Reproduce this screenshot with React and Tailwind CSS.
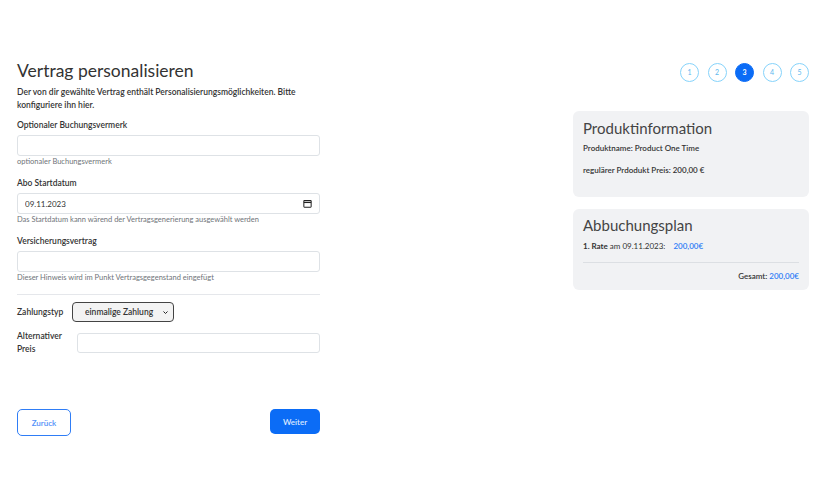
const font = { fontFamily: 'Lato, "Noto Sans", sans-serif' }

function Steps({ active = 3 }) {
  return (
    <div className="flex justify-end gap-[8.5px]">
      {[1, 2, 3, 4, 5].map(n => (
        <div
          key={n}
          className={`w-[19px] h-[19px] rounded-full flex items-center justify-center text-[7px] border-[1.5px] ${
            n === active ? 'bg-[#0b6cf6] border-[#0b6cf6] text-white font-bold' : 'border-[#86d3fb] text-[#5bb8ee]'
          }`}
        >
          {n}
        </div>
      ))}
    </div>
  )
}

function Field({ label, hint, children }) {
  return (
    <div className="flex flex-col">
      <label className="text-[8.5px] text-[#333] font-semibold leading-[12px]">{label}</label>
      <div className="mt-[4px] relative">{children}</div>
      {hint && <p className="text-[7.5px] text-[#6f7479] mt-[1px] leading-[9px]">{hint}</p>}
    </div>
  )
}

export default function App() {
  return (
    <div className="w-[836px] h-[500px] bg-white text-[#333] flex justify-between pl-[17px] pr-[27px] pt-[60px]" style={font}>
      {/* Form */}
      <div className="w-[303px] flex flex-col">
        <h1 className="text-[17.5px] leading-[21px] text-[#333]">Vertrag personalisieren</h1>
        <p className="text-[8.5px] leading-[13px] mt-[5px] font-semibold text-[#333]">
          Der von dir gewählte Vertrag enthält Personalisierungsmöglichkeiten. Bitte konfiguriere ihn hier.
        </p>

        <div className="mt-[7px] flex flex-col gap-[11px]">
          <Field label="Optionaler Buchungsvermerk" hint="optionaler Buchungsvermerk">
            <input className="block w-full h-[21px] border border-[#dee2e6] rounded-[3px] outline-none" />
          </Field>
          <Field label="Abo Startdatum" hint="Das Startdatum kann wärend der Vertragsgenerierung ausgewählt werden">
            <input
              readOnly
              value="09.11.2023"
              className="block w-full h-[21px] border border-[#dee2e6] rounded-[3px] px-[7px] text-[8px] text-[#333] outline-none"
            />
            <svg viewBox="0 0 16 16" className="absolute right-[8px] top-[6px] w-[9px] h-[9px]" fill="none" stroke="#222" strokeWidth="1.8">
              <rect x="1.5" y="2.5" width="13" height="12" rx="1" />
              <path d="M1.5 6h13" strokeWidth="2.4" />
            </svg>
          </Field>
          <Field label="Versicherungsvertrag" hint="Dieser Hinweis wird im Punkt Vertragsgegenstand eingefügt">
            <input className="block w-full h-[21px] border border-[#dee2e6] rounded-[3px] outline-none" />
          </Field>
        </div>

        <hr className="mt-[12px] border-[#e5e7eb]" />

        <div className="flex items-center gap-[8px] mt-[7px]">
          <span className="w-[47px] text-[8.5px] font-semibold">Zahlungstyp</span>
          <div className="relative">
            <select className="block appearance-none w-[102px] h-[20px] border-[1.5px] border-[#444] rounded-[4px] bg-[#f3f3f3] text-[8.5px] font-semibold pl-[12px] outline-none">
              <option>einmalige Zahlung</option>
            </select>
            <svg viewBox="0 0 10 10" className="absolute right-[6px] top-[8px] w-[5px] h-[5px]" fill="none" stroke="#222" strokeWidth="2">
              <path d="M1 3l4 4 4-4" />
            </svg>
          </div>
        </div>

        <div className="flex items-center gap-[8px] mt-[8px]">
          <span className="w-[52px] text-[8.5px] font-semibold leading-[13px]">Alternativer Preis</span>
          <input className="block flex-1 h-[20px] border border-[#dee2e6] rounded-[3px] outline-none" />
        </div>

        <div className="flex justify-between items-start mt-[53px]">
          <button className="w-[54px] h-[27px] border-[1.5px] border-[#2f7df6] rounded-[5px] text-[#4f8ff8] text-[8px] font-semibold">
            Zurück
          </button>
          <button className="w-[50px] h-[25px] bg-[#0b6cf6] rounded-[5px] text-[#dbe8ff] text-[8px] font-semibold">
            Weiter
          </button>
        </div>
      </div>

      {/* Sidebar */}
      <div className="w-[236px] flex flex-col pt-[3px]">
        <Steps />

        <div className="mt-[29px] bg-[#f1f2f4] rounded-[6px] px-[10px] pt-[7px] pb-[21px]">
          <h2 className="text-[15px] leading-[20px] text-[#444]">Produktinformation</h2>
          <p className="text-[8px] font-semibold mt-[4px]">Produktname: Product One Time</p>
          <p className="text-[8px] font-semibold mt-[10px]">regulärer Prdodukt Preis: 200,00 €</p>
        </div>

        <div className="mt-[12px] bg-[#f1f2f4] rounded-[6px] px-[10px] pt-[6px] pb-[8px]">
          <h2 className="text-[15px] leading-[20px] text-[#444]">Abbuchungsplan</h2>
          <p className="text-[8px] mt-[5px]">
            <span className="font-bold">1. Rate</span> am 09.11.2023:{' '}
            <span className="text-[#2f7df6] font-semibold ml-[6px]">200,00€</span>
          </p>
          <hr className="mt-[10px] border-[#dcdfe3]" />
          <p className="text-[8px] text-right mt-[7px] font-semibold">
            Gesamt: <span className="text-[#2f7df6]">200,00€</span>
          </p>
        </div>
      </div>
    </div>
  )
}
